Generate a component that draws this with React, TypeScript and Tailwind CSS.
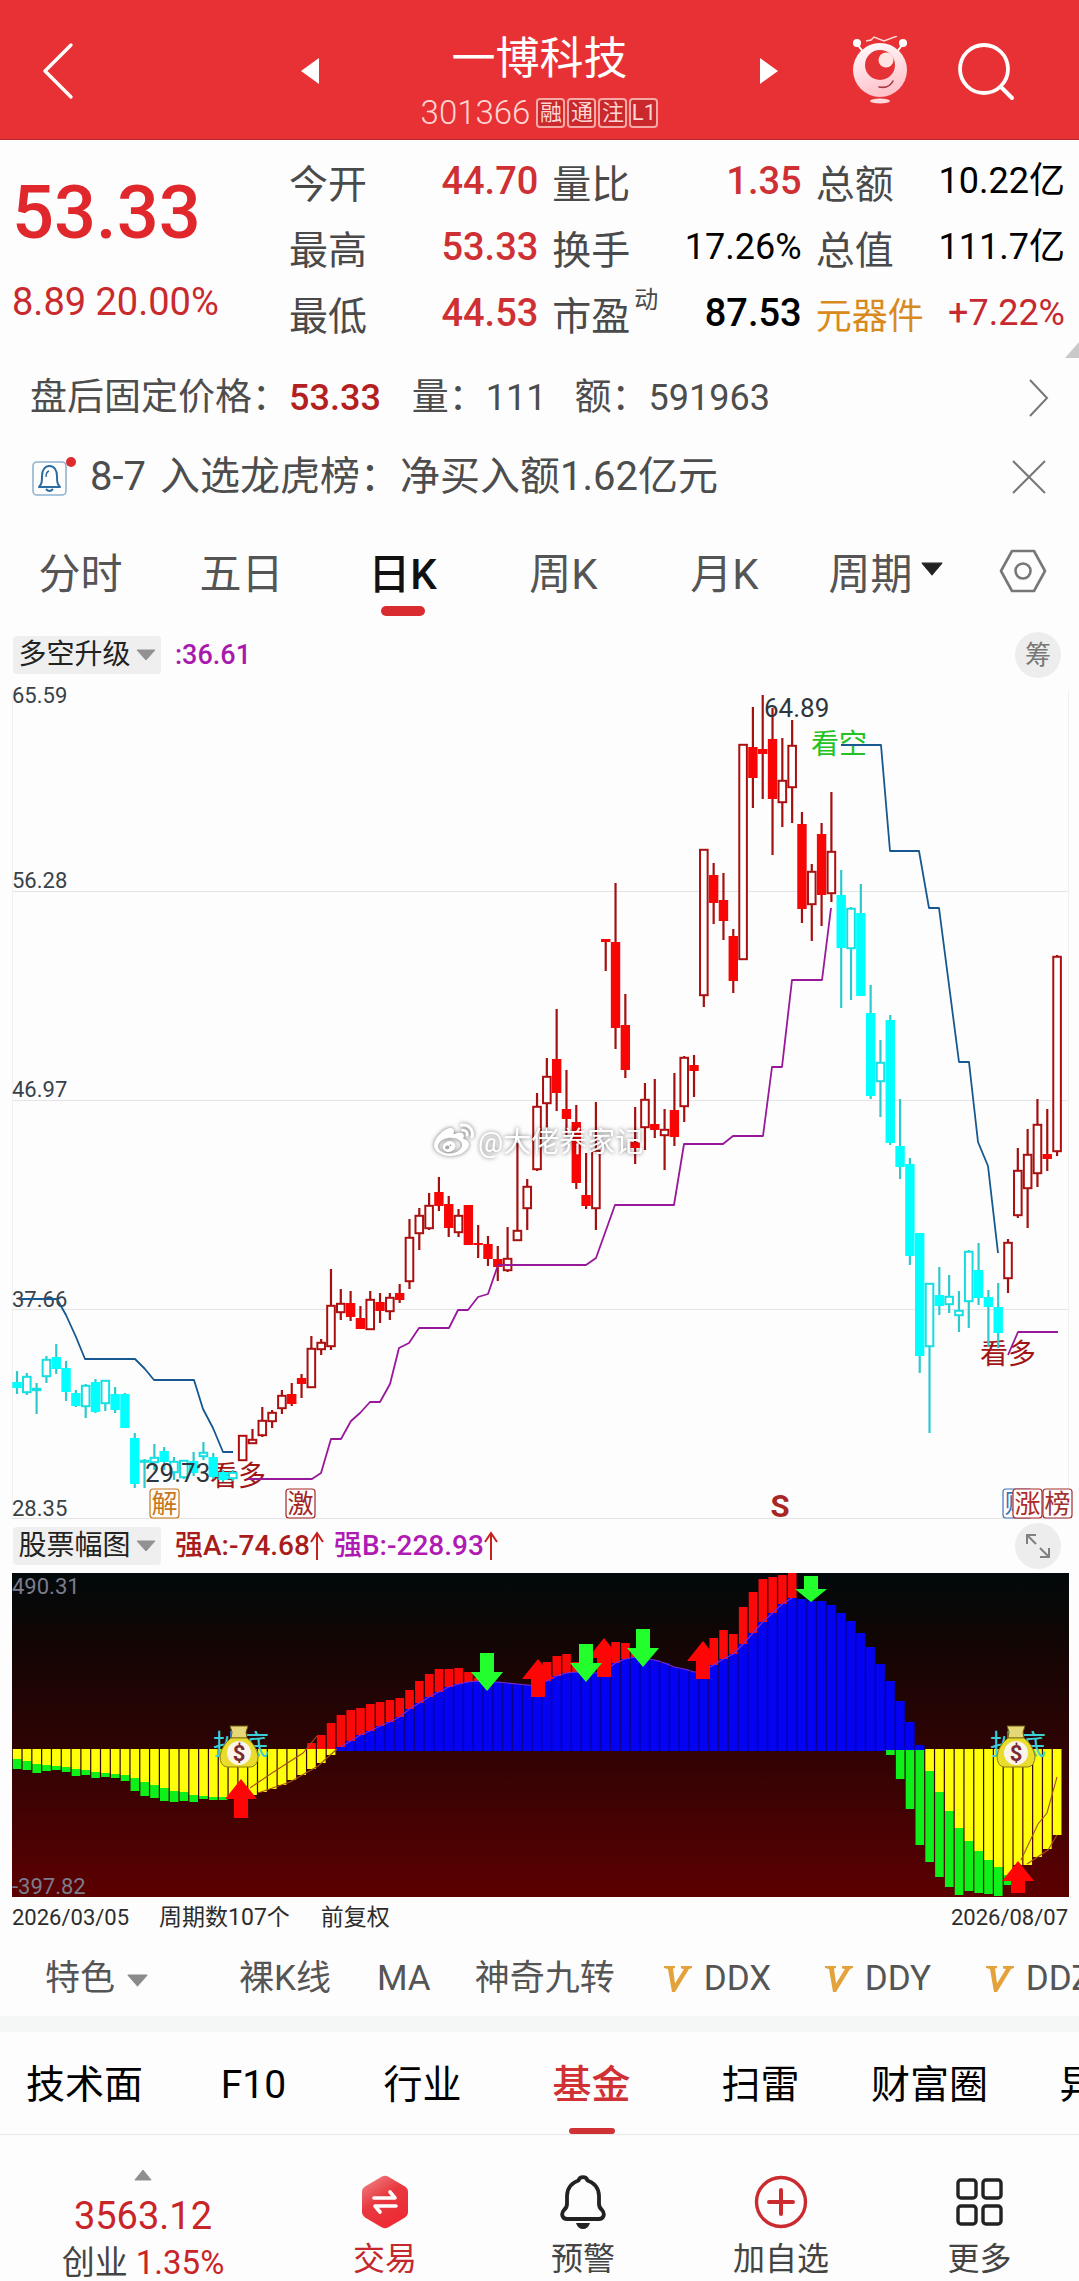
import React, { useState } from 'react';
import { FaWeibo } from 'react-icons/fa6';

type CandleKind = 'c' | 'C' | 'r' | 'R';

// kind, high, body top, body bottom, low (chart units, upper case = hollow body)
type Candle = [CandleKind, number, number, number, number];

const X0 = 17;
const STEP = 9.812;
const ZERO = 1750;

const xAt = (i: number) => X0 + i * STEP;

const CANDLES: Candle[] = [
  ['c', 1371, 1382, 1388, 1394], ['C', 1373, 1376, 1393, 1395], ['C', 1383, 1388, 1391, 1414],
  ['C', 1356, 1359, 1377, 1383], ['c', 1344, 1357, 1369, 1374], ['c', 1361, 1368, 1392, 1401],
  ['c', 1390, 1393, 1406, 1407], ['C', 1384, 1385, 1407, 1418], ['c', 1379, 1382, 1412, 1413],
  ['C', 1380, 1380, 1404, 1411], ['c', 1387, 1394, 1410, 1413], ['c', 1393, 1394, 1428, 1428],
  ['c', 1433, 1438, 1484, 1488], ['C', 1459, 1460, 1462, 1488], ['C', 1444, 1457, 1463, 1470],
  ['c', 1447, 1451, 1462, 1470], ['C', 1457, 1461, 1473, 1480], ['C', 1460, 1460, 1478, 1479],
  ['c', 1452, 1461, 1473, 1476], ['C', 1442, 1452, 1457, 1460], ['c', 1453, 1457, 1477, 1479],
  ['c', 1470, 1472, 1480, 1482], ['C', 1470, 1472, 1479, 1481], ['R', 1435, 1435, 1461, 1461],
  ['R', 1429, 1439, 1444, 1444], ['R', 1407, 1420, 1436, 1437], ['R', 1410, 1412, 1422, 1428],
  ['R', 1390, 1395, 1409, 1414], ['r', 1383, 1394, 1404, 1406], ['r', 1374, 1378, 1384, 1398],
  ['R', 1336, 1348, 1388, 1388], ['R', 1339, 1342, 1350, 1355], ['R', 1269, 1305, 1347, 1350],
  ['R', 1289, 1303, 1313, 1320], ['r', 1291, 1303, 1317, 1321], ['r', 1306, 1318, 1329, 1329],
  ['R', 1291, 1299, 1330, 1330], ['r', 1293, 1302, 1311, 1323], ['R', 1293, 1297, 1312, 1320],
  ['r', 1284, 1293, 1300, 1303], ['R', 1219, 1237, 1282, 1289], ['R', 1208, 1215, 1234, 1250],
  ['R', 1193, 1205, 1229, 1230], ['r', 1177, 1192, 1206, 1211], ['r', 1196, 1204, 1228, 1237],
  ['R', 1209, 1215, 1233, 1237], ['r', 1205, 1205, 1245, 1245], ['r', 1225, 1243, 1245, 1258],
  ['r', 1236, 1244, 1259, 1266], ['r', 1246, 1259, 1267, 1281], ['R', 1227, 1258, 1271, 1272],
  ['R', 1143, 1230, 1241, 1241], ['R', 1179, 1186, 1209, 1230], ['R', 1093, 1106, 1170, 1171],
  ['R', 1058, 1076, 1104, 1135], ['r', 1009, 1059, 1093, 1111], ['r', 1070, 1109, 1119, 1135],
  ['r', 1105, 1122, 1183, 1189], ['r', 1153, 1195, 1206, 1209], ['R', 1102, 1150, 1209, 1230],
  ['r', 939, 939, 942, 971], ['r', 883, 942, 1028, 1049], ['r', 994, 1025, 1070, 1078],
  ['r', 1107, 1142, 1148, 1164], ['R', 1083, 1099, 1128, 1150], ['r', 1079, 1124, 1130, 1138],
  ['R', 1109, 1129, 1136, 1170], ['r', 1073, 1110, 1137, 1146], ['R', 1056, 1057, 1107, 1122],
  ['r', 1055, 1065, 1071, 1097], ['R', 849, 849, 996, 1007], ['r', 863, 875, 903, 924],
  ['r', 873, 900, 921, 940], ['r', 929, 936, 981, 993], ['R', 744, 744, 960, 960],
  ['r', 707, 747, 778, 808], ['r', 695, 749, 754, 799], ['r', 708, 739, 799, 855],
  ['R', 738, 780, 803, 827], ['R', 720, 745, 788, 823], ['r', 812, 824, 909, 923],
  ['R', 864, 871, 905, 941], ['r', 823, 834, 895, 926], ['R', 792, 851, 894, 902],
  ['c', 870, 895, 948, 1008], ['C', 907, 908, 949, 1000], ['c', 884, 913, 996, 996],
  ['c', 985, 1013, 1096, 1099], ['C', 1040, 1062, 1082, 1117], ['c', 1015, 1020, 1143, 1145],
  ['c', 1099, 1146, 1167, 1179], ['c', 1158, 1164, 1256, 1265], ['c', 1233, 1233, 1356, 1373],
  ['C', 1283, 1283, 1347, 1433], ['c', 1267, 1295, 1306, 1315], ['C', 1275, 1296, 1305, 1313],
  ['C', 1291, 1310, 1316, 1332], ['C', 1250, 1251, 1302, 1328], ['c', 1243, 1270, 1298, 1305],
  ['c', 1290, 1297, 1307, 1347], ['c', 1283, 1307, 1333, 1348], ['R', 1239, 1242, 1279, 1293],
  ['R', 1148, 1170, 1216, 1218], ['R', 1129, 1154, 1189, 1228], ['R', 1099, 1124, 1174, 1187],
  ['r', 1109, 1154, 1159, 1171], ['R', 955, 956, 1152, 1156],
];

const BEAR_LINES = [
  '21,1299 57,1299 66,1315 76,1337 85,1359 135,1359 145,1369 154,1380 194,1380 203,1409 213,1428 223,1452 233,1452',
  '841,745 881,745 890,851 919,851 929,908 939,908 959,1062 969,1062 971,1080 978,1142 988,1166 998,1253',
];

const BULL_LINES = [
  '248,1479 312,1479 321,1473 331,1439 341,1439 351,1421 360,1413 370,1402 380,1402 390,1384 399,1348 409,1343 419,1328 449,1328 458,1310 468,1310 478,1297 488,1294 498,1265 586,1265 596,1258 615,1205 674,1205 684,1144 723,1144 733,1136 763,1136 772,1067 782,1067 792,980 822,980 831,908',
  '1008,1355 1018,1332 1058,1332',
];

// [yellow depth end, green depth end] by bar, starting at bar 0
const LEFT_LOWS: [number, number][] = [
  [1759, 1769], [1761, 1770], [1764, 1773], [1765, 1771], [1766, 1770], [1767, 1772], [1769, 1776],
  [1770, 1775], [1772, 1778], [1773, 1777], [1774, 1778], [1775, 1781], [1778, 1791], [1782, 1796],
  [1785, 1798], [1788, 1801], [1791, 1802], [1792, 1801], [1795, 1802], [1796, 1799], [1797, 1800],
  [1797, 1800], [1798, 1798], [1797, 1797], [1795, 1795], [1792, 1792], [1789, 1789], [1785, 1785],
  [1780, 1780], [1775, 1775], [1769, 1769], [1763, 1763], [1755, 1755],
];

// same pairs, starting at bar 89
const RIGHT_LOWS: [number, number][] = [
  [1750, 1755], [1750, 1779], [1750, 1809], [1750, 1845], [1771, 1862], [1792, 1877], [1811, 1887],
  [1828, 1895], [1841, 1891], [1851, 1893], [1860, 1894], [1867, 1896], [1875, 1885], [1865, 1865],
  [1865, 1865], [1857, 1857], [1849, 1849], [1835, 1835],
];

// blue bar tops, starting at bar 33
const BLUE_TOPS = [
  1747, 1741, 1735, 1731, 1726, 1722, 1717, 1709, 1703, 1697, 1692, 1687, 1684, 1682, 1681, 1682, 1682,
  1683, 1684, 1685, 1686, 1681, 1676, 1673, 1672, 1673, 1673, 1670, 1663, 1659, 1657, 1659, 1660, 1663,
  1667, 1669, 1672, 1671, 1665, 1659, 1654, 1644, 1633, 1622, 1613, 1604, 1598, 1599, 1601, 1601, 1605,
  1613, 1621, 1633, 1647, 1664, 1681, 1701, 1722, 1745,
];

// red bar tops keyed by bar
const RED_TOPS: [number, number][] = [
  [30, 1743], [31, 1735], [32, 1723], [33, 1715], [34, 1710], [35, 1708], [36, 1704], [37, 1702],
  [38, 1700], [39, 1698], [40, 1690], [41, 1681], [42, 1674], [43, 1669], [44, 1669], [45, 1668],
  [46, 1672], [47, 1678], [53, 1665], [54, 1662], [55, 1656], [56, 1654], [57, 1662], [60, 1650],
  [61, 1642], [62, 1643], [63, 1653], [70, 1650], [71, 1638], [72, 1630], [73, 1634], [74, 1607],
  [75, 1592], [76, 1579], [77, 1577], [78, 1575], [79, 1573],
];

const AXIS = [
  { label: '65.59', y: 703 },
  { label: '56.28', y: 888 },
  { label: '46.97', y: 1097 },
  { label: '37.66', y: 1307 },
  { label: '28.35', y: 1516 },
];

const QUOTES = [
  { label: '今开', value: '44.70', tone: 'text-[#cf3034] font-medium text-[38px]' },
  { label: '量比', value: '1.35', tone: 'text-[#cf3034] font-medium text-[38px]' },
  { label: '总额', value: '10.22亿', tone: 'text-black text-[36px]' },
  { label: '最高', value: '53.33', tone: 'text-[#cf3034] font-medium text-[38px]' },
  { label: '换手', value: '17.26%', tone: 'text-black text-[36px]' },
  { label: '总值', value: '111.7亿', tone: 'text-black text-[36px]' },
  { label: '最低', value: '44.53', tone: 'text-[#cf3034] font-medium text-[38px]' },
  { label: '市盈', note: '动', value: '87.53', tone: 'text-black font-medium text-[38px]' },
  { label: '元器件', value: '+7.22%', tone: 'text-[#c62a30] text-[36px]', link: true },
];

const PERIODS = ['分时', '五日', '日K', '周K', '月K'];
const SECTIONS = ['技术面', 'F10', '行业', '基金', '扫雷', '财富圈', '异动'];

function Triangle({ className, up = false }: { className: string; up?: boolean }) {
  return (
    <svg viewBox="0 0 20 12" preserveAspectRatio="none" className={className} aria-hidden="true">
      <path d={up ? 'M10 1 19 11H1z' : 'M1 1h18L10 11z'} fill="currentColor" stroke="currentColor" strokeLinejoin="round" />
    </svg>
  );
}

function Picker({ id, label, value }: { id: string; label: string; value: string }) {
  return (
    <label htmlFor={id} className="flex h-[38px] w-[148px] items-center justify-center gap-1 rounded-sm bg-[#efefef]">
      <span className="sr-only">{label}</span>
      <select id={id} className="appearance-none bg-transparent text-[28px] leading-9 font-normal text-[#222]">
        <option>{value}</option>
      </select>
      <Triangle className="h-3 w-5 text-[#929292]" />
    </label>
  );
}

function UpArrow() {
  return (
    <svg viewBox="0 0 14 30" className="h-[30px] w-[14px]" fill="none" stroke="#c8201f" strokeWidth="2" aria-hidden="true">
      <path d="M7 29V2M1 11 7 2l6 9" />
    </svg>
  );
}

function Header() {
  return (
    <header className="grid grid-cols-[1fr_478px_1fr] items-center border-b border-[#b9282b] bg-[#e83134] pt-[7px] pb-1 text-white">
      <button aria-label="返回" className="ml-10 w-9">
        <svg viewBox="0 0 36 60" className="h-[60px] w-9" fill="none" stroke="currentColor" strokeWidth="3.4" strokeLinecap="round" strokeLinejoin="round">
          <path d="M31 4 5 30l26 26" />
        </svg>
      </button>
      <div className="flex items-center justify-between">
        <button aria-label="上一只">
          <svg viewBox="0 0 18 26" className="h-[26px] w-[18px]" fill="currentColor"><path d="M18 0v26L0 13z" /></svg>
        </button>
        <div className="flex flex-col items-center pt-5">
          <h1 className="text-[44px] leading-[64px]">一博科技</h1>
          <div className="flex items-center gap-[2px] text-[#ffd6d3]">
            <span className="mr-1 text-[33px] leading-[44px] font-light">301366</span>
            {['融', '通', '注', 'L1'].map(tag => (
              <span key={tag} className="flex h-[30px] w-[29px] items-center justify-center rounded-sm border-2 border-[#f5a9a6] bg-[#c9282c] text-[22px] leading-6">
                {tag}
              </span>
            ))}
          </div>
        </div>
        <button aria-label="下一只">
          <svg viewBox="0 0 18 26" className="h-[26px] w-[18px]" fill="currentColor"><path d="M0 0v26l18-13z" /></svg>
        </button>
      </div>
      <div className="flex items-center justify-end gap-[48px] pr-[63px]">
        <button aria-label="智能助手">
          <svg viewBox="0 0 56 70" className="h-[70px] w-14">
            <defs>
              <linearGradient id="botFace" x1="0" y1="0" x2="0.3" y2="1">
                <stop offset="0" stopColor="#fff" />
                <stop offset="1" stopColor="#ffc3cb" />
              </linearGradient>
            </defs>
            <path d="m14 5 5-1 3-3 10 4 13-5" fill="none" stroke="#ffd9d6" strokeWidth="1.4" />
            <path d="M5 8l7 9M51 8l-7 9" stroke="#fff" strokeWidth="2" />
            <circle cx="5" cy="7" r="4" fill="#fff" />
            <circle cx="51" cy="7" r="4" fill="#fff" />
            <circle cx="28" cy="34" r="27" fill="url(#botFace)" />
            <circle cx="28" cy="29" r="15" fill="#e53236" />
            <circle cx="34" cy="24" r="7.5" fill="#ffe4e2" />
            <path d="M27 51q10 2 14-6" fill="none" stroke="#a8343c" strokeWidth="1.6" strokeLinecap="round" />
            <ellipse cx="28" cy="65" rx="10" ry="2.6" fill="#ffd9dc" />
          </svg>
        </button>
        <button aria-label="搜索">
          <svg viewBox="0 0 60 60" className="h-[60px] w-[60px]" fill="none" stroke="currentColor" strokeLinecap="round">
            <circle cx="28" cy="28" r="24" strokeWidth="3.8" />
            <path d="m45 46 11 11" strokeWidth="4" />
          </svg>
        </button>
      </div>
    </header>
  );
}

function Quote() {
  return (
    <section className="relative flex pt-3 pr-[14px] pb-2 pl-3">
      <div className="flex w-[277px] shrink-0 flex-col text-[#e0282c]">
        <strong className="pt-4 text-[74px] leading-[90px] font-medium">53.33</strong>
        <span className="pt-[21px] text-[38px] leading-[46px] text-[#c92a2e]">8.89 20.00%</span>
      </div>
      <dl className="grid flex-1 grid-cols-3 gap-x-[14px]">
        {QUOTES.map(q => (
          <div key={q.label} className="flex h-[66px] items-center justify-between whitespace-nowrap">
            <dt className={q.link ? 'text-[36px] text-[#d98a1f]' : 'flex text-[39px] text-[#4a4a4a]'}>
              {q.link ? <a href="#sector">{q.label}</a> : q.label}
              {q.note && <sup className="top-0 ml-1 text-[24px] leading-6">{q.note}</sup>}
            </dt>
            <dd className={`pb-2 ${q.tone}`}>{q.value}</dd>
          </div>
        ))}
      </dl>
      <svg viewBox="0 0 14 16" className="absolute right-0 bottom-0 h-4 w-[14px]" fill="#c9c9c9"><path d="M14 0v16H0z" /></svg>
    </section>
  );
}

function Notices() {
  return (
    <section className="text-[#4d4d4d]">
      <a href="#after-hours" className="flex items-center pr-[30px] pl-[30px] text-[37px] leading-[80px]">
        <span>盘后固定价格：</span>
        <span className="mr-[31px] text-[36px] font-medium text-[#b3201f]">53.33</span>
        <span>量：</span>
        <span className="mr-[28px] text-[36px]">111</span>
        <span>额：</span>
        <span className="text-[36px]">591963</span>
        <svg viewBox="0 0 20 40" className="ml-auto h-10 w-5" fill="none" stroke="#777" strokeWidth="2"><path d="m1 2 17 18L1 38" /></svg>
      </a>
      <div className="flex items-center pr-8 pl-8 text-[40px] leading-[78px]">
        <svg viewBox="0 0 46 46" className="mr-3 h-[46px] w-[46px]" fill="none" aria-hidden="true">
          <rect x="1" y="8" width="33" height="33" rx="4" stroke="#8fb3cf" strokeWidth="1.6" />
          <path d="M7 33h21c-3-3-3-6-3-11 0-6-3-10-7.500-10S10 16 10 22c0 5 0 8-3 11z" stroke="#2b6ca5" strokeWidth="2" strokeLinejoin="round" />
          <path d="M14 35q3.500 4 7 0" stroke="#2b6ca5" strokeWidth="2" />
          <path d="M14 23q0-5 3-6" stroke="#2b6ca5" strokeWidth="1.400" />
          <circle cx="39" cy="8" r="5" fill="#dd2c2f" />
        </svg>
        <time className="mr-[14px]">8-7</time>
        <span>入选龙虎榜：净买入额1.62亿元</span>
        <button aria-label="关闭" className="ml-auto">
          <svg viewBox="0 0 36 36" className="h-9 w-9" fill="none" stroke="#777" strokeWidth="2"><path d="m2 2 32 32M34 2 2 34" /></svg>
        </button>
      </div>
    </section>
  );
}

function PeriodTabs() {
  const [active, setActive] = useState('日K');
  return (
    <nav className="grid grid-cols-[repeat(5,161fr)_161fr_113fr] items-center text-[42px] leading-[118px] text-[#555]">
      {PERIODS.map(p => (
        <button key={p} onClick={() => setActive(p)} className={p === active ? 'relative font-medium text-[#111]' : 'relative'}>
          {p}
          {p === active && <span className="absolute bottom-[18px] left-1/2 h-[10px] w-11 -translate-x-1/2 rounded-full bg-[#d92c30]" />}
        </button>
      ))}
      <label htmlFor="period" className="flex items-center justify-center gap-[7px]">
        <span className="sr-only">周期选择</span>
        <select id="period" className="appearance-none bg-transparent leading-[60px]">
          <option>周期</option>
        </select>
        <Triangle className="mb-3 h-[14px] w-[22px] text-[#222]" />
      </label>
      <button aria-label="设置" className="flex justify-center pb-2">
        <svg viewBox="0 0 48 44" className="h-11 w-12" fill="none" stroke="#777" strokeWidth="2.6" strokeLinejoin="round">
          <path d="M13 2h22l11 20-11 20H13L2 22z" />
          <circle cx="24" cy="22" r="7.500" />
        </svg>
      </button>
    </nav>
  );
}

function CandleShape({ candle, x }: { candle: Candle; x: number }) {
  const [kind, high, top, bottom, low] = candle;
  const cyan = kind === 'c' || kind === 'C';
  const hollow = kind === 'C' || kind === 'R';
  const wick = cyan ? '#2fc9cb' : '#a31010';
  const edge = cyan ? '#14dfe2' : '#ab0f0f';
  const height = Math.max(bottom - top, 2);
  if (hollow) {
    return (
      <g stroke={edge}>
        <path d={`M${x} ${high}V${top}M${x} ${bottom}V${low}`} stroke={wick} strokeWidth="2.2" />
        <rect x={x - 3.8} y={top + 0.8} width="7.6" height={Math.max(height - 1.6, 1)} fill="#fff" strokeWidth="2" />
      </g>
    );
  }
  return (
    <g>
      <path d={`M${x} ${high}V${low}`} stroke={wick} strokeWidth="2.2" />
      <rect x={x - 4.7} y={top} width="9.4" height={height} fill={cyan ? '#00ffff' : '#f80606'} />
    </g>
  );
}

function EventTag({ x, text, color }: { x: number; text: string; color: string }) {
  return (
    <g>
      <rect x={x} y="1489" width="29" height="29" rx="3" fill="#fdfdfd" stroke={color} strokeWidth="1.2" />
      <text x={x + 14.5} y="1513" fontSize="26" textAnchor="middle" fill={color}>{text}</text>
    </g>
  );
}

function KLineChart() {
  return (
    <svg viewBox="12 676 1057 849" className="ml-3 block w-[calc(100%-22px)] overflow-visible" role="img" aria-label="日K线">
      <g stroke="#e4e4e6" strokeWidth="1">
        <path d="M12 891.500H1068M12 1100.500H1068M12 1309.500H1068M12 1518.500H1068" />
        <path d="M12.500 690V1518M1068.500 690V1518" stroke="#f1f1f1" />
      </g>
      <g fontSize="22" fill="#3a4148">
        {AXIS.map(a => <text key={a.label} x="12" y={a.y}>{a.label}</text>)}
      </g>
      <g fontSize="28">
        <text x="210" y="1486" fill="#a01414">看多</text>
        <text x="980" y="1364" fill="#a01414">看多</text>
        <text x="811" y="754" fill="#22c322">看空</text>
      </g>
      {CANDLES.map((c, i) => <CandleShape key={i} candle={c} x={xAt(i)} />)}
      <g fill="none" strokeWidth="1.8" strokeLinejoin="round">
        {BEAR_LINES.map(p => <polyline key={p} points={p} stroke="#16588f" />)}
        {BULL_LINES.map(p => <polyline key={p} points={p} stroke="#98189a" />)}
      </g>
      <g fontSize="26" fill="#2d363d">
        <text x="145" y="1482">29.73</text>
        <text x="764" y="717">64.89</text>
      </g>
      <EventTag x={150} text="解" color="#c9761a" />
      <EventTag x={286} text="激" color="#a32626" />
      <text x="780" y="1517" fontSize="31" fontWeight="700" textAnchor="middle" fill="#a82626">S</text>
      <EventTag x={1003} text="财" color="#3f74b8" />
      <EventTag x={1013} text="涨" color="#b02828" />
      <EventTag x={1043} text="榜" color="#a23030" />
      <g className="drop-shadow-[0_0_2px_rgba(0,0,0,0.55)]" fill="#fff" color="#fff">
        <FaWeibo x="434" y="1121" size="40" />
        <text x="478" y="1152" fontSize="28">@大佬养家记</text>
      </g>
    </svg>
  );
}

function Marker({ x, tip, base, down = false }: { x: number; tip: number; base: number; down?: boolean }) {
  const neck = down ? Math.max(tip - 19, base + 13) : tip + 20;
  return (
    <path
      d={`M${x} ${tip}L${x + 16} ${neck}H${x + 7}V${base}H${x - 7}V${neck}H${x - 16}Z`}
      fill={down ? '#22ff2c' : '#ff0505'}
    />
  );
}

function MoneyBag({ x }: { x: number }) {
  return (
    <g>
      <text x={x - 26} y="1755" fontSize="28" fill="#3bd0d8">抄底</text>
      <path d={`M${x - 9} 1726h18l-2 6 1 6h-16l1-6z`} fill="#e6d878" stroke="#6d5c10" strokeWidth="1" />
      <path d={`M${x - 8} 1738h16q9 7 11 18 0 10-7 11h-24q-7-1-7-11 2-11 11-18z`} fill="#e9dc2c" stroke="#8d7d12" strokeWidth="1" />
      <circle cx={x} cy="1753" r="12" fill="#fbf4ea" />
      <text x={x} y="1761" fontSize="22" fontWeight="700" textAnchor="middle" fill="#7a2c30">$</text>
    </g>
  );
}

function LowBars({ data, start }: { data: [number, number][]; start: number }) {
  return (
    <g>
      {data.map(([yellow, green], k) => {
        const x = xAt(start + k) - 4.2;
        return (
          <g key={k}>
            {green > yellow && <rect x={x} y={yellow} width="8.600" height={green - yellow} fill="#0df01a" />}
            {yellow > ZERO && <rect x={x} y={ZERO - 1} width="8.600" height={yellow - ZERO + 1} fill="#ffff0a" />}
          </g>
        );
      })}
    </g>
  );
}

function RangeChart() {
  const crest = BLUE_TOPS.slice(0, 47).map((y, k) => `${xAt(33 + k)},${y}`).join(' ');
  return (
    <svg viewBox="12 1573 1057 324" className="ml-3 block w-[calc(100%-22px)]" role="img" aria-label="股票幅图">
      <defs>
        <linearGradient id="rangeBg" x1="0" y1="0" x2="0" y2="1">
          <stop offset="0" stopColor="#02090b" />
          <stop offset="0.2" stopColor="#100604" />
          <stop offset="0.55" stopColor="#300304" />
          <stop offset="1" stopColor="#5c0001" />
        </linearGradient>
      </defs>
      <rect x="12" y="1573" width="1057" height="324" fill="url(#rangeBg)" />
      {RED_TOPS.map(([i, y]) => (
        <rect key={i} x={xAt(i) - 4.2} y={y} width="8.600" height={ZERO - y} fill="#fb0808" />
      ))}
      {BLUE_TOPS.map((y, k) => (
        <g key={k}>
          <rect x={xAt(33 + k) - 4.9} y={y} width="9.812" height={ZERO + 1 - y} fill="#0503b8" />
          <rect x={xAt(33 + k) - 4.2} y={y} width="8" height={ZERO + 1 - y} fill="#0402f2" />
        </g>
      ))}
      <polyline points={crest} fill="none" stroke="#7a2ad8" strokeWidth="1.2" />
      <LowBars data={LEFT_LOWS} start={0} />
      <LowBars data={RIGHT_LOWS} start={89} />
      <g fill="none" stroke="#a8501c" strokeWidth="1.1">
        <path d="M250 1788 272 1773 303 1753 317 1736M258 1793 290 1782 318 1766 337 1749" />
        <path d="M1021 1860 1038 1824 1047 1813 1057 1777M1027 1864 1048 1850 1057 1835" />
      </g>
      <Marker x={604} base={1677} tip={1638} />
      <Marker x={487} base={1653} tip={1691} down />
      <Marker x={586} base={1644} tip={1682} down />
      <Marker x={643} base={1629} tip={1667} down />
      <Marker x={811} base={1576} tip={1602} down />
      <Marker x={241} base={1818} tip={1779} />
      <Marker x={538} base={1697} tip={1659} />
      <Marker x={703} base={1679} tip={1641} />
      <Marker x={1018} base={1893} tip={1861} />
      <MoneyBag x={239} />
      <MoneyBag x={1016} />
      <g fontSize="22" fill="#7b7c8c">
        <text x="12" y="1594">490.31</text>
        <text x="12" y="1894">-397.82</text>
      </g>
    </svg>
  );
}

function ToolStrip() {
  return (
    <nav className="flex items-center overflow-hidden border-b-[16px] border-[#f5f6f6] pt-[2px] pl-[45px] text-[35px] leading-[75px] whitespace-nowrap text-[#555]">
      <label htmlFor="feature" className="mr-[91px] flex shrink-0 items-center gap-[11px]">
        <span className="sr-only">特色指标</span>
        <select id="feature" className="appearance-none bg-transparent leading-[50px]">
          <option>特色</option>
        </select>
        <Triangle className="mt-1 h-[13px] w-[21px] text-[#8b8b8b]" />
      </label>
      <button className="mr-[46px] shrink-0">裸K线</button>
      <button className="mr-[44px] shrink-0">MA</button>
      <button className="mr-[49px] shrink-0">神奇九转</button>
      {['DDX', 'DDY', 'DDZ'].map(name => (
        <button key={name} className="flex w-[161px] shrink-0 items-center gap-3">
          <svg viewBox="0 0 28 26" className="h-[26px] w-7" fill="#e3a23c" aria-hidden="true">
            <path d="M0 0h11v2l-2 .500 2 15L20 3l-3-.500V0h11v2l-3 1L11 26H8L4 3 0 2z" />
          </svg>
          {name}
        </button>
      ))}
    </nav>
  );
}

function SectionTabs() {
  const [active, setActive] = useState('基金');
  return (
    <nav className="flex overflow-hidden border-b border-[#e6e9e9] text-[39px] leading-[98px] text-black">
      {SECTIONS.map(s => (
        <button
          key={s}
          onClick={() => setActive(s)}
          className={s === active ? 'relative w-[169px] shrink-0 pt-1 font-medium text-[#cf3135]' : 'relative w-[169px] shrink-0 pt-1'}
        >
          {s}
          {s === active && <span className="absolute bottom-0 left-1/2 h-[6px] w-[46px] -translate-x-1/2 rounded-sm bg-[#cf3135]" />}
        </button>
      ))}
    </nav>
  );
}

function BottomBar() {
  const item = 'flex flex-col items-center gap-1 text-[32px] leading-[52px] text-[#444]';
  return (
    <footer className="grid grid-cols-[286fr_198fr_198fr_198fr_199fr] pt-[34px]">
      <button className="flex flex-col items-center text-[#c92428]">
        <Triangle up className="h-3 w-[18px] text-[#8f8f8f]" />
        <span className="mt-2 text-[38px] leading-[54px]">3563.12</span>
        <span className="text-[33px] leading-[39px]"><span className="text-[#444]">创业</span> 1.35%</span>
      </button>
      <button className={item}>
        <svg viewBox="0 0 48 54" className="mt-[6px] h-[54px] w-12">
          <defs>
            <linearGradient id="tradeBg" x1="0" y1="0" x2="0.6" y2="1">
              <stop offset="0" stopColor="#f08d8f" />
              <stop offset="0.5" stopColor="#e8393f" />
              <stop offset="1" stopColor="#ee2a33" />
            </linearGradient>
          </defs>
          <path d="M21 1.500q3-1.500 6 0l17 10q3 2 3 5v21q0 3-3 5l-17 10q-3 1.500-6 0l-17-10q-3-2-3-5v-21q0-3 3-5z" fill="url(#tradeBg)" />
          <path d="M13 23h21l-5-6M35 31H14l5 6" fill="none" stroke="#fff" strokeWidth="3.600" strokeLinecap="round" strokeLinejoin="round" />
        </svg>
        <span className="text-[#c5282c]">交易</span>
      </button>
      <button className={item}>
        <svg viewBox="0 0 46 54" className="mt-[6px] h-[54px] w-[46px]" fill="none">
          <path d="M18.500 5.500C19.500 1 26.500 1 27.500 5.500 35 8 39 14 39 21v8c0 3 .500 4 3 6 3.500 4 1.500 9-3 9H7c-4.500 0-6.500-5-3-9 2.500-2 3-3 3-6v-8C7 14 11 8 18.500 5.500z" stroke="#222" strokeWidth="3.800" strokeLinejoin="round" />
          <path d="M16 48h14q-2 6-7 6t-7-6z" fill="#222" />
        </svg>
        预警
      </button>
      <button className={item}>
        <svg viewBox="0 0 54 54" className="mt-[6px] h-[54px] w-[54px]" fill="none" stroke="#cb2b2f" strokeLinecap="round">
          <circle cx="27" cy="27" r="24.500" strokeWidth="3.400" />
          <path d="M27 15v24M15 27h24" strokeWidth="4" />
        </svg>
        加自选
      </button>
      <button className={item}>
        <svg viewBox="0 0 50 50" className="mt-2 mb-[2px] h-[50px] w-[50px]" fill="none" stroke="#222" strokeWidth="3.400">
          <rect x="3" y="3" width="18" height="18" rx="3" />
          <rect x="28" y="3" width="18" height="18" rx="3" />
          <rect x="3" y="29" width="18" height="18" rx="3" />
          <rect x="28" y="29" width="18" height="18" rx="3" />
        </svg>
        更多
      </button>
    </footer>
  );
}

function RoundButton({ label, children }: { label: string; children: React.ReactNode }) {
  return (
    <button aria-label={label} className="ml-auto flex h-[46px] w-[46px] items-center justify-center rounded-full bg-[#ededed] text-[26px] text-[#777]">
      {children}
    </button>
  );
}

export default function App() {
  return (
    <div className="w-full overflow-hidden bg-[#fdfdfd] font-['Roboto','Noto_Sans_CJK_SC',sans-serif]">
      <Header />
      <Quote />
      <Notices />
      <PeriodTabs />
      <div className="flex h-[42px] items-center pr-[18px] pl-[13px]">
        <Picker id="main-indicator" label="主图指标" value="多空升级" />
        <span className="ml-[14px] text-[27px] font-medium text-[#a81aae]">:36.61</span>
        <RoundButton label="筹码">筹</RoundButton>
      </div>
      <KLineChart />
      <div className="mb-[6px] flex h-[42px] items-center pr-[18px] pl-[13px] text-[28px] font-medium">
        <Picker id="sub-indicator" label="副图指标" value="股票幅图" />
        <span className="ml-[14px] flex items-center text-[#a81c1c]">强A:-74.68<UpArrow /></span>
        <span className="ml-[10px] flex items-center text-[#b01ab4]">强B:-228.93<UpArrow /></span>
        <RoundButton label="全屏">
          <svg viewBox="0 0 26 26" className="h-[26px] w-[26px]" fill="none" stroke="#808080" strokeWidth="2">
            <path d="M2 11V2h9M2 2l9 9M24 15v9h-9M24 24l-9-9" />
          </svg>
        </RoundButton>
      </div>
      <RangeChart />
      <div className="flex items-center pr-[11px] pl-3 text-[23px] leading-[42px] text-[#2c2c2c]">
        <time className="text-[22px]">2026/03/05</time>
        <span className="ml-[30px]">周期数107个</span>
        <span className="ml-[31px]">前复权</span>
        <time className="ml-auto text-[22px]">2026/08/07</time>
      </div>
      <ToolStrip />
      <SectionTabs />
      <BottomBar />
    </div>
  );
}
